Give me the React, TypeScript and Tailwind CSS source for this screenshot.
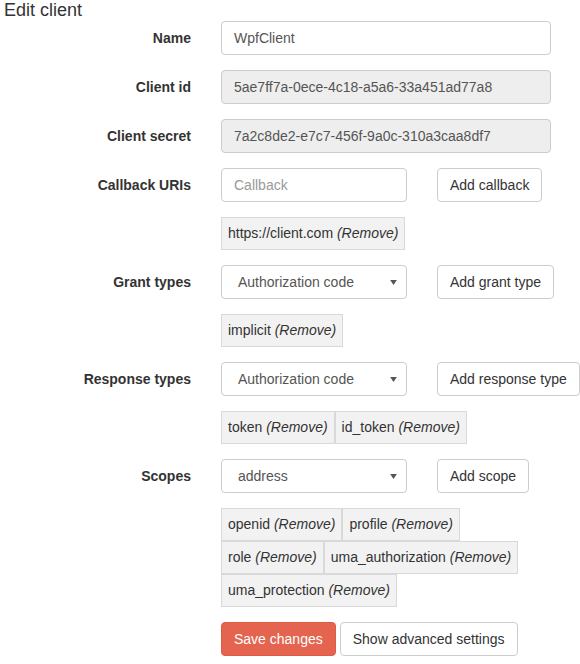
import React from "react";

const FONT = "font-[family-name:'Liberation_Sans',Arial,sans-serif]";

type Tag = { label: string };

function Label({ children }: { children: React.ReactNode }) {
  return (
    <div className="w-[191px] shrink-0 pt-[7px] text-right text-[14px] font-bold leading-[20px] text-[#333]">
      {children}
    </div>
  );
}

function Button({ children, className = "" }: { children: React.ReactNode; className?: string }) {
  return (
    <button
      type="button"
      className={`h-[34px] shrink-0 whitespace-nowrap rounded-[4px] border border-[#ccc] bg-white px-[12px] text-[14px] leading-[20px] text-[#333] ${className}`}
    >
      {children}
    </button>
  );
}

function Select({ value }: { value: string }) {
  return (
    <div className="relative h-[34px] w-[186px] shrink-0 rounded-[4px] border border-[#ccc] bg-white">
      <div className="pl-[16px] pt-[6px] text-[14px] leading-[20px] text-[#555]">{value}</div>
      {/* dropdown arrow */}
      <svg viewBox="0 0 8 6" className="absolute right-[9px] top-[14px] h-[5px] w-[7px]">
        <path d="M0 0 L8 0 L4 6 Z" fill="#555" />
      </svg>
    </div>
  );
}

function Tags({ tags }: { tags: Tag[] }) {
  return (
    <div className="mb-[15px] flex flex-wrap">
      {tags.map((t) => (
        <div
          key={t.label}
          className="flex h-[33px] items-center whitespace-nowrap border border-[#d9d9d9] bg-[#f2f2f2] px-[6px] text-[14px] text-[#333]"
        >
          {t.label}&nbsp;<span className="italic">(Remove)</span>
        </div>
      ))}
    </div>
  );
}

function TextRow({ label, value, readOnly }: { label: string; value: string; readOnly?: boolean }) {
  return (
    <div className="mb-[15px] flex">
      <Label>{label}</Label>
      <div
        className={`ml-[30px] h-[34px] w-[330px] rounded-[4px] border border-[#ccc] px-[12px] pt-[6px] text-[14px] leading-[20px] text-[#555] ${
          readOnly ? "bg-[#eee]" : "bg-white"
        }`}
      >
        {value}
      </div>
    </div>
  );
}

function ListRow({
  label,
  control,
  action,
  tags,
}: {
  label: string;
  control: React.ReactNode;
  action: string;
  tags: Tag[];
}) {
  return (
    <>
      <div className="mb-[15px] flex">
        <Label>{label}</Label>
        <div className="ml-[30px] flex gap-[30px]">
          {control}
          <Button>{action}</Button>
        </div>
      </div>
      <div className="ml-[221px]">
        <Tags tags={tags} />
      </div>
    </>
  );
}

export default function App() {
  return (
    <div className={`${FONT} h-[664px] w-[580px] overflow-hidden bg-white`}>
      <div className="h-[21px] pl-[4px] text-[18px] leading-[20px] text-[#333]">Edit client</div>

      <TextRow label="Name" value="WpfClient" />
      <TextRow label="Client id" value="5ae7ff7a-0ece-4c18-a5a6-33a451ad77a8" readOnly />
      <TextRow label="Client secret" value="7a2c8de2-e7c7-456f-9a0c-310a3caa8df7" readOnly />

      <ListRow
        label="Callback URIs"
        control={
          <div className="h-[34px] w-[186px] shrink-0 rounded-[4px] border border-[#ccc] bg-white px-[12px] pt-[6px] text-[14px] leading-[20px] text-[#999]">
            Callback
          </div>
        }
        action="Add callback"
        tags={[{ label: "https://client.com" }]}
      />

      <ListRow
        label="Grant types"
        control={<Select value="Authorization code" />}
        action="Add grant type"
        tags={[{ label: "implicit" }]}
      />

      <ListRow
        label="Response types"
        control={<Select value="Authorization code" />}
        action="Add response type"
        tags={[{ label: "token" }, { label: "id_token" }]}
      />

      <div className="mb-[15px] flex">
        <Label>Scopes</Label>
        <div className="ml-[30px] flex gap-[30px]">
          <Select value="address" />
          <Button>Add scope</Button>
        </div>
      </div>
      <div className="ml-[221px] w-[310px]">
        <Tags
          tags={[
            { label: "openid" },
            { label: "profile" },
            { label: "role" },
            { label: "uma_authorization" },
            { label: "uma_protection" },
          ]}
        />
      </div>

      <div className="ml-[221px] mt-[1px] flex gap-[4px]">
        <button
          type="button"
          className="h-[34px] rounded-[4px] border border-[#e05a45] bg-[#e4644f] px-[12px] text-[14px] leading-[20px] text-white"
        >
          Save changes
        </button>
        <Button>Show advanced settings</Button>
      </div>
    </div>
  );
}
